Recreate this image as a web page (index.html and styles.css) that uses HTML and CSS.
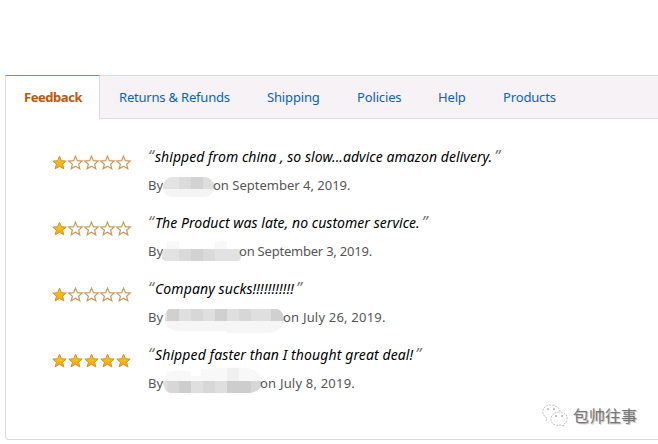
FILE: index.html
```html
<!DOCTYPE html>
<html lang="en">
<head>
<meta charset="utf-8">
<title>Seller feedback</title>
<link rel="stylesheet" href="styles.css">
</head>
<body>
<svg class="defs" aria-hidden="true">
  <defs>
    <linearGradient id="gold" x1="0" y1="0" x2="0" y2="1"><stop offset="0" stop-color="#ffce00"/><stop offset="1" stop-color="#ffa400"/></linearGradient>
    <path id="star" d="M7.5 1.2 9.4 5.7 14.2 6.1 10.6 9.2 11.8 13.8 7.5 11.3 3.2 13.8 4.4 9.2 .8 6.1 5.6 5.7Z"/>
    <g id="full"><use href="#star" fill="url(#gold)" stroke="#c59343"/></g>
    <g id="empty"><use href="#star" fill="#fff" stroke="#c79a55" stroke-width="1.2"/></g>
    <g id="one"><use href="#full"/><use href="#empty" x="16"/><use href="#empty" x="32"/><use href="#empty" x="48"/><use href="#empty" x="64"/></g>
    <g id="five"><use href="#full"/><use href="#full" x="16"/><use href="#full" x="32"/><use href="#full" x="48"/><use href="#full" x="64"/></g>
  </defs>
</svg>
<main class="panel">
  <nav class="tabs">
    <a class="tab active">Feedback</a>
    <a class="tab returns">Returns &amp; Refunds</a>
    <a class="tab shipping">Shipping</a>
    <a class="tab policies">Policies</a>
    <a class="tab help">Help</a>
    <a class="tab products">Products</a>
  </nav>
  <section class="reviews">
    <article class="review">
      <svg class="stars" viewBox="0 0 80 15"><use href="#one"/></svg>
      <div class="body">
        <p class="quote"><span class="mark">“</span><span class="q1">shipped from china , so slow...advice amazon delivery.</span><span class="mark end">”</span></p>
        <p class="by"><span class="who">By</span><svg class="mask" width="51" height="26" viewBox="163 172 51 26"><clipPath id="c1"><rect x="163" y="177" width="51" height="20" rx="9"/></clipPath><g clip-path="url(#c1)"><path fill="#f4f4f4" d="M163 189h51v8h-51z"/><path fill="#e3e3e3" d="M163 177h16v12h-16z"/><path fill="#dbdbdb" d="M179 177h12v12h-12z"/><path fill="#d2d2d2" d="M191 177h12v12h-12z"/><path fill="#dedede" d="M203 177h11v12h-11z"/></g></svg><span class="d1">on September 4, 2019.</span></p>
      </div>
    </article>
    <article class="review">
      <svg class="stars" viewBox="0 0 80 15"><use href="#one"/></svg>
      <div class="body">
        <p class="quote"><span class="mark">“</span><span class="q2">The Product was late, no customer service.</span><span class="mark end">”</span></p>
        <p class="by"><span class="who">By</span><svg class="mask m2" width="79" height="26" viewBox="162 238 79 26"><path fill="#f8f8f8" d="M167 249v-7l12-1v8zM215 249v-7q8-3 12 0v7z"/><clipPath id="c2"><rect x="162" y="249" width="79" height="12" rx="4"/></clipPath><g clip-path="url(#c2)"><path fill="#e2e2e2" d="M162 249h79v12h-79z"/><path fill="#dadada" d="M179 249h12v12h-12zM203 249h12v12h-12z"/><path fill="#d2d2d2" d="M191 249h12v12h-12z"/></g></svg><span class="d2">on September 3, 2019.</span></p>
      </div>
    </article>
    <article class="review">
      <svg class="stars" viewBox="0 0 80 15"><use href="#one"/></svg>
      <div class="body">
        <p class="quote"><span class="mark">“</span><span class="q3">Company sucks!!!!!!!!!!!</span><span class="mark end">”</span></p>
        <p class="by"><span class="who">By</span><svg class="mask m3" width="119" height="30" viewBox="165 304 119 30"><clipPath id="c3"><path d="M169 309h108q7 2 7 12-2 10-14 12h-43v-2h-49q-13-2-13-12 0-8 4-10z"/></clipPath><g clip-path="url(#c3)"><path fill="#f6f6f6" d="M165 321h119v12h-119z"/><path fill="#dfdfdf" d="M165 309h119v12h-119z"/><path fill="#d0d0d0" d="M167 309h12v12h-12zM215 309h12v12h-12zM271 309h13v12h-13z"/><path fill="#d7d7d7" d="M191 309h12v12h-12zM239 309h12v12h-12z"/></g></svg><span class="d3">on July 26, 2019.</span></p>
      </div>
    </article>
    <article class="review">
      <svg class="stars" viewBox="0 0 80 15"><use href="#five"/></svg>
      <div class="body">
        <p class="quote"><span class="mark">“</span><span class="q4">Shipped faster than I thought great deal!</span><span class="mark end">”</span></p>
        <p class="by"><span class="who">By</span><svg class="mask m4" width="99" height="28" viewBox="163 367 99 28"><clipPath id="c4"><path d="M167 372q12-3 24 0v4h10v-7q22-2 48-1 13 4 13 13 0 11-13 12H171q-8-1-8-12z"/></clipPath><g clip-path="url(#c4)"><path fill="#f8f8f8" d="M163 367h99v14h-99z"/><path fill="#f0f0f0" d="M227 367h12v14h-12z"/><path fill="#dfdfdf" d="M163 381h99v12h-99z"/><path fill="#d7d7d7" d="M167 381h12v12h-12zM203 381h12v12h-12zM251 381h11v12h-11z"/><path fill="#cdcdcd" d="M179 381h12v12h-12zM227 381h24v12h-24z"/></g></svg><span class="d4">on July 8, 2019.</span></p>
      </div>
    </article>
  </section>
  <div class="watermark">
    <svg width="28" height="24" viewBox="0 0 28 24" fill="#fff" stroke="#aaa" stroke-width=".7" stroke-dasharray="2 1"><path d="M5 17l1-3C-1 10 1 1 10 1c6 0 9 4 9 7"/><path d="M23 22l-3-1C8 24 6 9 18 8c10 0 10 9 5 12z"/><path stroke="#888" stroke-width="1" stroke-dasharray="none" d="M6 5h2M12 5h2M14 12h2M20 12h2"/></svg>
    <span>包帅往事</span>
  </div>
</main>
</body>
</html>
```
FILE: styles.css
```css
* { box-sizing: border-box; }
body { margin: 0; padding: 75px 0 0 5px; background: #fff; color: #555; font: 13px/20px "Noto Sans", "Noto Sans CJK SC", sans-serif; overflow: hidden; }
.defs { position: absolute; width: 0; height: 0; }
.panel { position: relative; height: 365px; border: solid #ddd; border-width: 0 0 1px 1px; border-radius: 0 0 0 4px; }
.tabs { display: flex; height: 44px; margin-left: -1px; background: #f7f2f6; border: solid #ddd; border-width: 1px 0; }
.tab { flex: none; color: #0066c0; line-height: 43px; white-space: nowrap; letter-spacing: -.15px; }
.tab.active { width: 95px; height: 44px; margin: -1px 19px 0 0; padding: 0 0 0 18px; background: #fff; border: solid #ddd; border-width: 1px 1px 0 1px; border-top-color: #e47911; color: #c45500; font-weight: 700; letter-spacing: -.45px; line-height: 43px; }
.returns { width: 148px; letter-spacing: -.2px; }
.shipping { width: 90px; }
.policies { width: 81px; }
.help { width: 65px; }
.reviews { padding: 28px 0 0 46px; }
.review { display: flex; height: 66px; }
.stars { flex: none; width: 80px; height: 15px; margin-top: 8px; }
.body { margin-left: 16px; white-space: nowrap; }
p { margin: 0; display: flex; height: 20px; }
.quote { color: #000; font-size: 14px; font-style: italic; }
.q1, .q2 { letter-spacing: .05px; }
.q3, .q4 { letter-spacing: .11px; }
.d2 { letter-spacing: -.22px; }
.d3, .d4 { letter-spacing: .2px; }
.mark { width: 7px; color: #777; font-size: 16px; line-height: 18px; }
.mark.end { margin-left: 2px; }
.by { margin-top: 8px; }
.who { width: 15px; }
.mask { flex: none; margin: -3px -1px 0 0; }
.m2 { margin: -3px -2px 0 -1px; }
.m3 { margin: -3px -1px 0 2px; }
.m4 { margin: -6px -2px 0 0; }
.watermark { position: absolute; left: 535px; top: 329px; display: flex; gap: 4px; font-size: 16px; line-height: 24px; color: #777; text-shadow: 1px 1px 1px #bbb; }
```
